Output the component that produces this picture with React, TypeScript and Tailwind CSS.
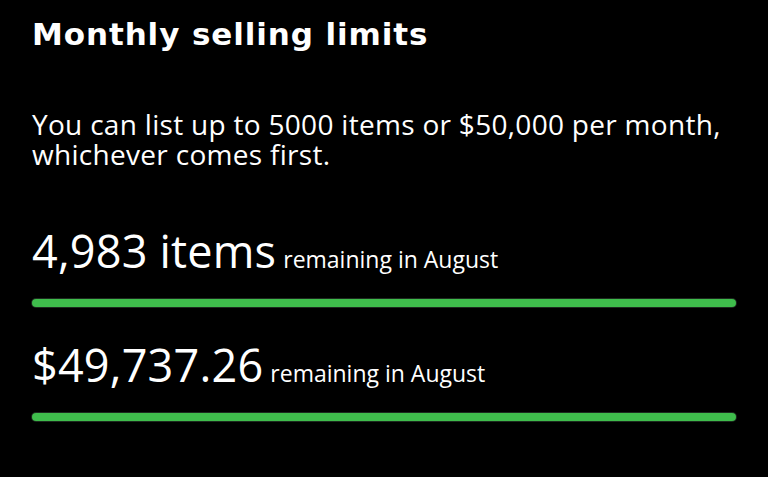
export default function App() {
    const rows = [
        { value: '4,983 items' },
        { value: '$49,737.26' },
    ]

    return (
        <div className="w-[768px] h-[477px] bg-black text-white px-8 pt-[15px] overflow-hidden font-['Open_Sans',sans-serif]">
            <h1 className="text-[31px] leading-[38px] font-bold tracking-[0.9px] font-['DejaVu_Sans',sans-serif]">Monthly selling limits</h1>

            <div className="mt-[56px] text-[28px] leading-[30px] tracking-[0.3px]">
                <p>You can list up to 5000 items or $50,000 per month,</p>
                <p>whichever comes first.</p>
            </div>

            {rows.map((r, i) => (
                <div key={i} className={i === 0 ? 'mt-[56px]' : 'mt-[32px]'}>
                    <div className="flex items-baseline gap-[7px] h-[52px]">
                        <span className="text-[45px] leading-[52px] tracking-[0.2px]">{r.value}</span>
                        <span className="text-[23px] leading-[26px]">remaining in August</span>
                    </div>
                    {/* progress */}
                    <div className="mt-[22px] h-2 rounded-full bg-[#3fbd4c] shadow-[0_0_0_1px_#1c2a1e]" />
                </div>
            ))}
        </div>
    )
}
